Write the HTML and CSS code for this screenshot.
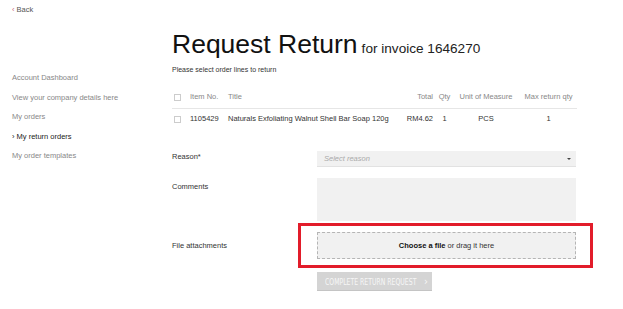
FILE: index.html
```html
<!DOCTYPE html>
<html lang="en">
<head>
    <meta charset="UTF-8">
    <meta name="viewport" content="width=device-width, initial-scale=1.0">
    <title>Request Return</title>
    <link rel="stylesheet" href="styles.css">
</head>
<body>
    <div class="topbar">
        <a href="#" class="back"><span class="chev">&lsaquo;</span> Back</a>
    </div>

    <div class="layout">
        <!-- Account menu -->
        <ul class="sidebar">
            <li><a href="#">Account Dashboard</a></li>
            <li><a href="#">View your company details here</a></li>
            <li><a href="#">My orders</a></li>
            <li class="active"><a href="#">&rsaquo; My return orders</a></li>
            <li><a href="#">My order templates</a></li>
        </ul>

        <div class="main">
            <h1>Request Return<span class="invoice">for invoice 1646270</span></h1>
            <p class="hint">Please select order lines to return</p>

            <div class="lines">
                <div class="line head">
                    <span><i class="check"></i></span>
                    <span>Item No.</span>
                    <span>Title</span>
                    <span class="right">Total</span>
                    <span class="center">Qty</span>
                    <span class="center">Unit of Measure</span>
                    <span class="center">Max return qty</span>
                </div>
                <div class="line">
                    <span><i class="check"></i></span>
                    <span>1105429</span>
                    <span>Naturals Exfoliating Walnut Shell Bar Soap 120g</span>
                    <span class="right">RM4.62</span>
                    <span class="center">1</span>
                    <span class="center">PCS</span>
                    <span class="center">1</span>
                </div>
            </div>

            <div class="form">
                <div class="row reason">
                    <label>Reason*</label>
                    <div class="select">
                        <span>Select reason</span>
                        <i class="caret"></i>
                    </div>
                </div>
                <div class="row comments">
                    <label>Comments</label>
                    <div class="textarea"></div>
                </div>
                <div class="row files">
                    <label>File attachments</label>
                    <div class="dropzone">
                        <b>Choose a file</b> or drag it here
                        <div class="highlight"></div>
                    </div>
                </div>
                <div class="row">
                    <span></span>
                    <div>
                        <button class="submit">
                            <span class="label"><span>COMPLETE RETURN REQUEST</span></span>
                            <span class="arrow">&rsaquo;</span>
                        </button>
                    </div>
                </div>
            </div>
        </div>
    </div>
</body>
</html>
```

FILE: styles.css
```css
body {
    margin: 0;
    font-family: 'Liberation Sans', Arial, sans-serif;
    color: #333;
    background: #fff;
    font-size: 7.5px;
    line-height: 10px;
}

a {
    color: inherit;
    text-decoration: none;
}

.topbar {
    padding: 5px 12px 0;
}

.back {
    color: #555;
}

.back .chev {
    color: #c9687a;
}

.layout {
    display: flex;
}

.sidebar {
    list-style: none;
    margin: 0;
    padding: 58px 0 0 12px;
    width: 160px;
}

.sidebar li {
    margin-bottom: 9.5px;
    color: #888;
}

.sidebar li.active {
    color: #222;
}

.main {
    width: 405px;
    padding-top: 14px;
}

h1 {
    margin: 0;
    height: 30px;
    font-size: 26.5px;
    line-height: 30px;
    font-weight: normal;
    color: #111;
}

.invoice {
    margin-left: 4px;
    font-size: 13.6px;
    line-height: 1;
    color: #222;
}

.hint {
    margin: 6px 0 0;
    font-size: 7px;
    color: #333;
}

/* order lines */
.lines {
    margin-top: 12px;
}

.line {
    display: grid;
    grid-template-columns: 18px 38px 1fr 34px 15px 68px 57px;
    padding: 5px 0;
    white-space: nowrap;
}

.line.head {
    padding-bottom: 6px;
    border-bottom: 1px solid #e6e6e6;
    color: #888;
}

.right {
    text-align: right;
    padding-right: 4px;
}

.center {
    text-align: center;
}

.check {
    display: inline-block;
    width: 5px;
    height: 5px;
    margin: 2px 0 0 2px;
    border: 1px solid #ccc;
    vertical-align: top;
}

/* form */
.form {
    margin-top: 22px;
}

.row {
    display: grid;
    grid-template-columns: 145px 259px;
    margin-bottom: 11px;
}

.row label {
    color: #333;
}

.reason label {
    padding-top: 1px;
}

.comments label {
    padding-top: 4px;
}

.files {
    align-items: center;
    margin-bottom: 13px;
}

.select {
    height: 16px;
    background: #f1f1f1;
    border-bottom: 1px solid #e2e2e2;
    box-sizing: border-box;
    display: flex;
    align-items: center;
    justify-content: space-between;
    padding: 0 5px 0 7px;
    color: #aaa;
    font-style: italic;
}

.caret {
    width: 0;
    height: 0;
    border-left: 2px solid transparent;
    border-right: 2px solid transparent;
    border-top: 2.5px solid #444;
}

.textarea {
    height: 43px;
    background: #f1f1f1;
}

.dropzone {
    position: relative;
    height: 27px;
    box-sizing: border-box;
    background: #f1f1f1;
    border: 1px dashed #b5b5b5;
    display: flex;
    align-items: center;
    justify-content: center;
    gap: 2px;
    color: #333;
}

.dropzone b {
    color: #111;
}

/* red annotation frame */
.highlight {
    position: absolute;
    top: -10px;
    left: -20px;
    right: -18px;
    bottom: -10px;
    border: 3px solid #e21c2a;
}

.submit {
    display: flex;
    align-items: center;
    height: 19px;
    width: 115px;
    border: none;
    background: #d4d4d4;
    border-bottom: 1px solid #c4c4c4;
    color: #f7f7f7;
    font-family: 'Liberation Sans Narrow', 'DejaVu Sans Condensed', sans-serif;
    font-size: 9.5px;
    padding: 0 0 0 8px;
    white-space: nowrap;
}

.submit .label {
    width: 85px;
}

.submit .label span {
    display: inline-block;
    transform: scaleX(0.72);
    transform-origin: left center;
}

.submit .arrow {
    margin-left: 14px;
    font-size: 11px;
}
```
